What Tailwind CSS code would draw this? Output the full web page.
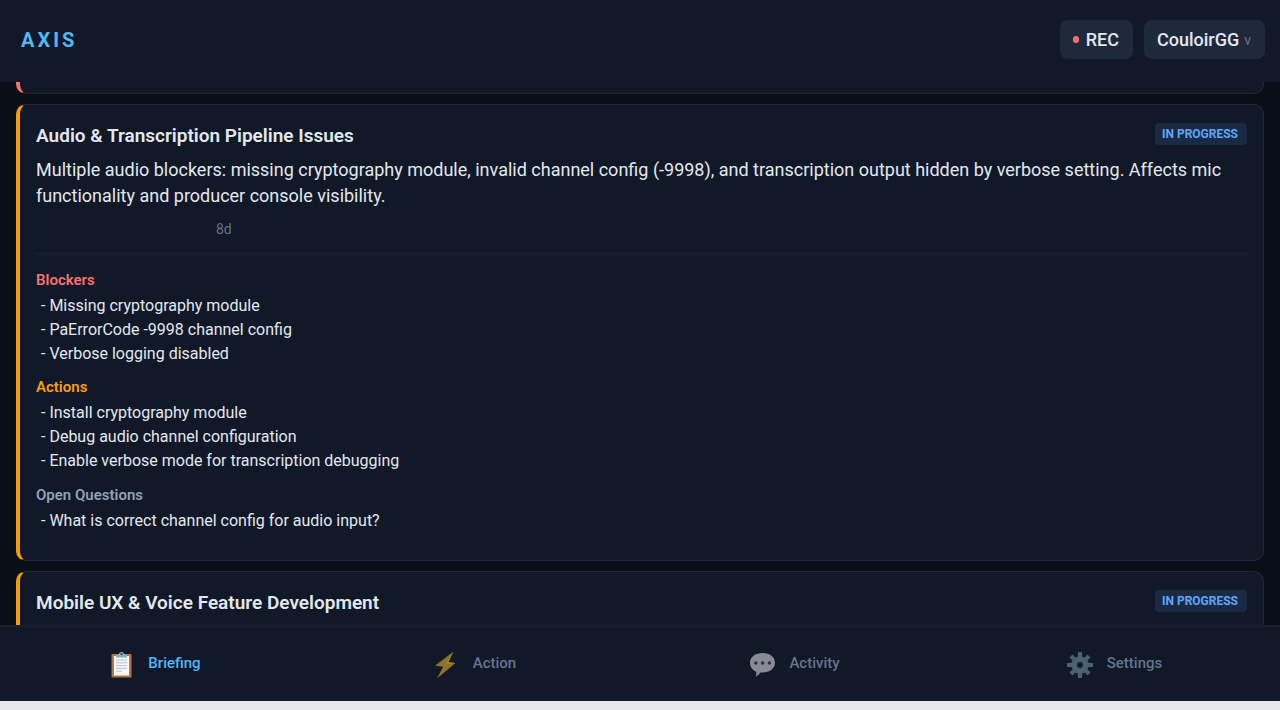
<!DOCTYPE html>
<html lang="en">
<head>
  <meta charset="UTF-8" />
  <meta name="viewport" content="width=device-width, initial-scale=1.0"/>
  <title>AXIS</title>
  <script src="https://cdn.jsdelivr.net/npm/@tailwindcss/browser@4"></script>
</head>
<body class="flex flex-col h-screen pb-[9px] bg-[#e8e8ea] text-slate-200 font-['Roboto',sans-serif] overflow-hidden">

  <!-- Header -->
  <header class="flex items-start justify-between shrink-0 h-[82px] pt-5 pl-[21px] pr-[15px] bg-[#111827]">
    <h1 class="text-xl leading-10 font-bold tracking-[3px] text-[#4fb8f8]">AXIS</h1>
    <div class="flex gap-[11px]">
      <button class="flex items-center gap-[7px] h-[39px] pl-[13px] pr-3.5 rounded-lg bg-[#1e293b] text-lg font-medium">
        <span class="w-1.5 h-[7px] rounded-full bg-[#f87171]"></span>
        REC
      </button>
      <button class="flex items-center gap-[5px] h-[39px] pl-[13px] pr-3.5 rounded-lg bg-[#1e293b] text-lg font-medium">
        CouloirGG
        <span class="text-sm font-normal text-slate-500">v</span>
      </button>
    </div>
  </header>

  <!-- Briefing cards -->
  <main class="flex-1 min-h-0 px-4 bg-[#0a0e17] overflow-hidden">
    <article class="h-3 mb-2.5 rounded-b-[10px] border border-t-0 border-l-4 border-[#1e293b] border-l-[#f87171] bg-[#111827]"></article>

    <article class="mb-2.5 pt-[18px] px-4 pb-[27px] rounded-[10px] border border-l-4 border-[#1e293b] border-l-[#f59e0b] bg-[#111827]">
      <div class="flex items-start justify-between">
        <h2 class="text-[19px] leading-[26px] font-semibold">Audio &amp; Transcription Pipeline Issues</h2>
        <span class="pl-[7px] pr-[9px] rounded bg-[#1b2a43] text-xs leading-[22px] font-bold text-[#60a5fa]">IN PROGRESS</span>
      </div>
      <p class="mt-2 text-lg leading-[26px]">Multiple audio blockers: missing cryptography module, invalid channel config (-9998), and transcription output hidden by verbose setting. Affects mic functionality and producer console visibility.</p>
      <div class="mt-2.5 pl-[180px] text-sm leading-5 text-slate-500">8d</div>

      <div class="mt-3.5 pt-[15px] border-t-2 border-[#182131]">
        <h3 class="text-[15px] leading-5 font-semibold text-[#f87171]">Blockers</h3>
        <ul class="mt-1 pl-[5px] text-base">
          <li>- Missing cryptography module</li>
          <li>- PaErrorCode -9998 channel config</li>
          <li>- Verbose logging disabled</li>
        </ul>
        <h3 class="mt-[11px] text-[15px] leading-5 font-semibold text-[#f59e0b]">Actions</h3>
        <ul class="mt-1 pl-[5px] text-base">
          <li>- Install cryptography module</li>
          <li>- Debug audio channel configuration</li>
          <li>- Enable verbose mode for transcription debugging</li>
        </ul>
        <h3 class="mt-3 text-[15px] leading-5 font-semibold text-slate-400">Open Questions</h3>
        <ul class="mt-1 pl-[5px] text-base">
          <li>- What is correct channel config for audio input?</li>
        </ul>
      </div>
    </article>

    <article class="pt-[18px] px-4 pb-[27px] rounded-t-[10px] border border-l-4 border-[#1e293b] border-l-[#f59e0b] bg-[#111827]">
      <div class="flex items-start justify-between">
        <h2 class="text-[19px] leading-[26px] font-semibold">Mobile UX &amp; Voice Feature Development</h2>
        <span class="pl-[7px] pr-[9px] rounded bg-[#1b2a43] text-xs leading-[22px] font-bold text-[#60a5fa]">IN PROGRESS</span>
      </div>
    </article>
  </main>

  <!-- Bottom tabs -->
  <nav class="grid grid-cols-4 shrink-0 h-[76px] border-t-2 border-[#182131] bg-[#111827] text-[15px] font-medium text-slate-500">
    <button class="flex items-center justify-center gap-[13px] pr-3 pb-0.5 text-[#4fb8f8]">
      <svg class="w-7 h-7 mt-1" viewBox="0 0 28 28">
        <rect x="4.500" y="3" width="20" height="23.500" rx="1" fill="#b87445"/>
        <path d="M7 5h15v19.500h-15z" fill="#f6f7f9"/>
        <path d="M9 9h11M9 11.800h11M9 14.600h11M9 17.400h11M9 20.200h6" stroke="#b5bac4" stroke-width=".9"/>
        <path d="M9 6.500V4.600q0-1.100 1.200-1.100h1.700a2.600 2.600 0 0 1 5.200 0h1.700q1.200 0 1.200 1.100v1.900z" fill="#86b0bb"/>
        <circle cx="14.500" cy="3.100" r="1.100" fill="#2b4652"/>
      </svg>
      Briefing
    </button>
    <button class="flex items-center justify-center gap-[13px] pr-3 pb-0.5">
      <svg class="w-7 h-7 mt-1" viewBox="0 0 28 28">
        <path d="M21.500.5 3 14.800l8.200.9L5 27.500 23.500 12l-7.200-.8z" fill="#8b7426"/>
        <path d="M21.500.5 16.300 11.200l7.200.8-9.500 1z" fill="#a0872d"/>
      </svg>
      Action
    </button>
    <button class="flex items-center justify-center gap-[13px] pr-3 pb-0.5">
      <svg class="w-7 h-7 mt-1" viewBox="0 0 28 28">
        <path d="M14.500 2c7.300 0 12.500 4 12.500 9.800s-5.200 9.700-12.500 9.700h-2.200C11 23.500 9.500 25 7.600 25.500c.7-1.500.9-3.200.6-4.800C4.300 19 2 15.900 2 11.800 2 6 7.200 2 14.500 2z" fill="#898b92"/>
        <circle cx="7.800" cy="12" r="1.800" fill="#30343e"/>
        <circle cx="14.600" cy="12" r="1.800" fill="#30343e"/>
        <circle cx="21.400" cy="12" r="1.800" fill="#30343e"/>
      </svg>
      Activity
    </button>
    <button class="flex items-center justify-center gap-[13px] pr-3 pb-0.5">
      <svg class="w-7 h-7 mt-1" viewBox="0 0 28 28">
        <path d="M14 1v26M1 14h26M5 5l18 18M23 5 5 23" stroke="#48616e" stroke-width="4.200"/>
        <circle cx="14" cy="14" r="8.800" fill="#48616e"/>
        <circle cx="14" cy="14" r="5" fill="#3f5763" stroke="#5a7480" stroke-width=".8"/>
        <circle cx="14" cy="14" r="2.700" fill="#111827"/>
      </svg>
      Settings
    </button>
  </nav>

</body>
</html>
